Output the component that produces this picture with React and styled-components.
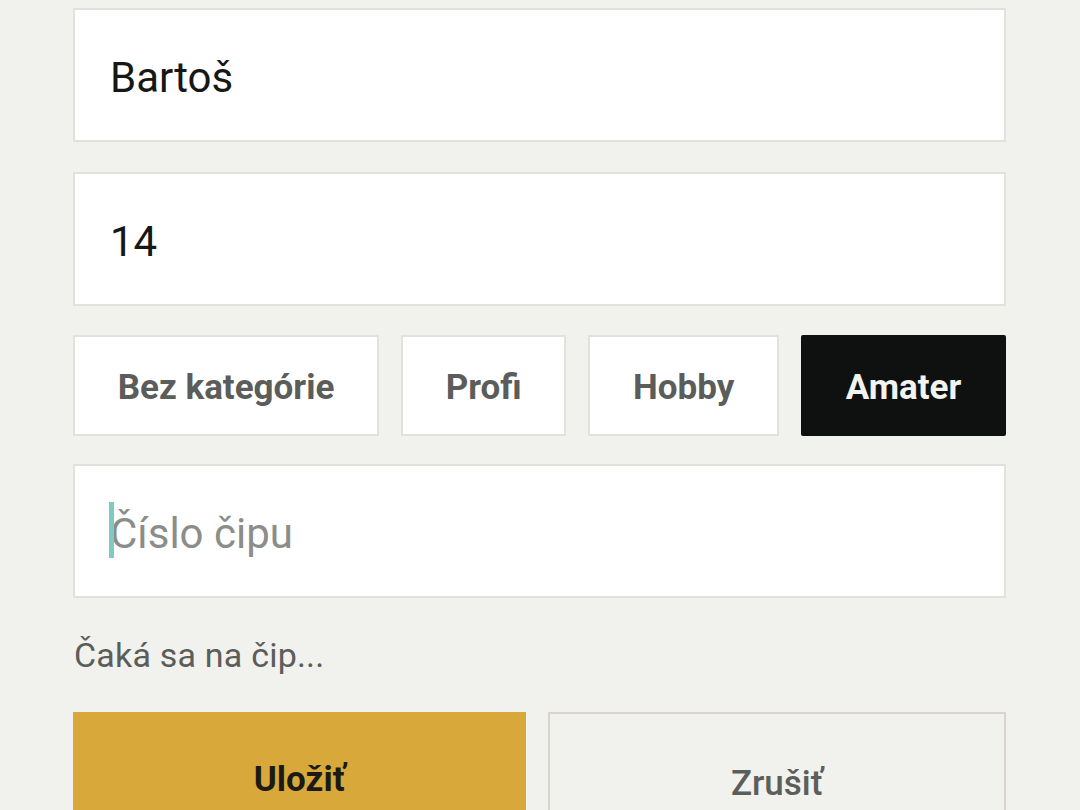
import React, { useState } from "react";
import styled, { createGlobalStyle } from "styled-components";

const GlobalStyle = createGlobalStyle`
  html, body {
    margin: 0;
    padding: 0;
    background: #f1f1ed;
  }
  body {
    font-family: Roboto, "Liberation Sans", sans-serif;
  }
`;

const Page = styled.div`
  width: 1080px;
  height: 810px;
  overflow: hidden;
  background: #f1f1ed;
  padding: 8px 74px 0 73px;
  box-sizing: border-box;
`;

const Form = styled.form`
  display: flex;
  flex-direction: column;
`;

const Field = styled.div`
  position: relative;
  margin-bottom: ${(p) => p.$gap ?? 30}px;
`;

const Input = styled.input`
  display: block;
  width: 100%;
  height: 134px;
  box-sizing: border-box;
  border: 2px solid #e2e2dc;
  background: #ffffff;
  padding: 5px 34px 0 35px;
  font-family: Roboto, "Liberation Sans", sans-serif;
  font-size: 42px;
  font-weight: 400;
  color: #161816;
  outline: none;
  border-radius: 0;
  &::placeholder {
    color: #8b8d89;
  }
`;

const Caret = styled.span`
  position: absolute;
  left: 36px;
  top: 38px;
  width: 5px;
  height: 56px;
  background: #7fcbc4;
`;

const Categories = styled.div`
  display: flex;
  gap: 22px;
  height: 101px;
  margin-bottom: 28px;
`;

const CategoryButton = styled.button`
  flex: 1 1 auto;
  box-sizing: border-box;
  padding: 4px 30px 0;
  border: 2px solid ${(p) => (p.$active ? "#0f1110" : "#e2e2dc")};
  background: ${(p) => (p.$active ? "#0f1110" : "#ffffff")};
  color: ${(p) => (p.$active ? "#f2f2ee" : "#5a5d59")};
  font-family: Roboto, "Liberation Sans", sans-serif;
  font-size: 35px;
  font-weight: 700;
  border-radius: ${(p) => (p.$active ? "2px" : "0")};
  cursor: pointer;
  white-space: nowrap;
`;

const Status = styled.p`
  margin: 37px 0 37px 1px;
  font-size: 34px;
  line-height: 40px;
  letter-spacing: 0.2px;
  color: #5b5d5a;
`;

const Actions = styled.div`
  display: flex;
  gap: 22px;
`;

const ActionButton = styled.button`
  flex: ${(p) => (p.$primary ? "0 0 453px" : "1 1 auto")};
  height: 136px;
  box-sizing: border-box;
  border: 2px solid ${(p) => (p.$primary ? "#d8a83b" : "#d9d5ce")};
  background: ${(p) => (p.$primary ? "#d8a83b" : "#f1f1ed")};
  color: ${(p) => (p.$primary ? "#1c1a14" : "#5c5e5b")};
  font-family: Roboto, "Liberation Sans", sans-serif;
  font-size: 35px;
  font-weight: ${(p) => (p.$primary ? 700 : 500)};
  padding-top: ${(p) => (p.$primary ? "0" : "8px")};
  border-radius: 0;
  cursor: pointer;
`;

const categories = ["Bez kategórie", "Profi", "Hobby", "Amater"];

export default function App() {
  const [category, setCategory] = useState("Amater");
  const [name, setName] = useState("Bartoš");
  const [number, setNumber] = useState("14");
  const [chip, setChip] = useState("");

  return (
    <Page>
      <GlobalStyle />
      <Form onSubmit={(e) => e.preventDefault()}>
        <Field>
          <Input value={name} onChange={(e) => setName(e.target.value)} />
        </Field>
        <Field $gap={29}>
          <Input value={number} onChange={(e) => setNumber(e.target.value)} />
        </Field>
        <Categories>
          {categories.map((c) => (
            <CategoryButton
              key={c}
              type="button"
              $active={c === category}
              onClick={() => setCategory(c)}
            >
              {c}
            </CategoryButton>
          ))}
        </Categories>
        <Field $gap={0}>
          <Input
            placeholder="Číslo čipu"
            value={chip}
            onChange={(e) => setChip(e.target.value)}
          />
          {!chip && <Caret />}
        </Field>
        <Status>Čaká sa na čip...</Status>
        <Actions>
          <ActionButton type="submit" $primary>
            Uložiť
          </ActionButton>
          <ActionButton type="button">Zrušiť</ActionButton>
        </Actions>
      </Form>
    </Page>
  );
}
